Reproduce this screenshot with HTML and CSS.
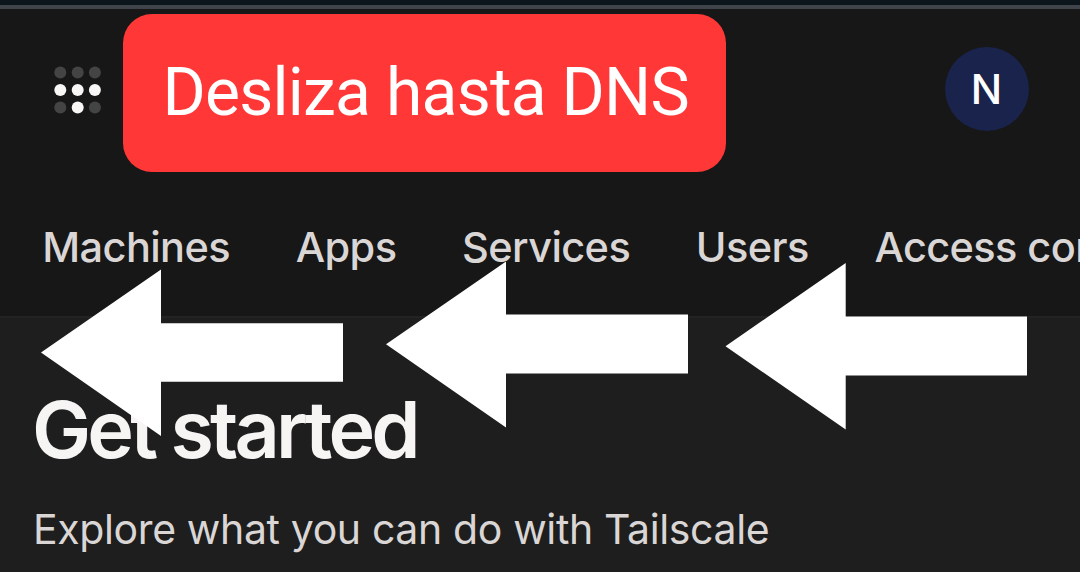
FILE: index.html
```html
<!DOCTYPE html>
<html lang="en">
<head>
<meta charset="utf-8">
<title>Get started</title>
<link rel="stylesheet" href="styles.css">
</head>
<body>
<div class="page">
  <header class="header">
    <div class="topbar">
      <svg class="logo" viewBox="0 0 48 48" width="48" height="48">
        <g fill="#444"><circle cx="6.3" cy="6.5" r="6"/><circle cx="23.7" cy="6.5" r="6"/><circle cx="40.900" cy="6.5" r="6"/><circle cx="6.3" cy="41.500" r="6"/><circle cx="40.900" cy="41.500" r="6"/></g>
        <g fill="#f9f7f6"><circle cx="6.3" cy="24" r="6"/><circle cx="23.7" cy="24" r="6"/><circle cx="40.900" cy="24" r="6"/><circle cx="23.7" cy="41.500" r="6"/></g>
      </svg>
      <div class="banner"><span class="banner-text">Desliza hasta DNS</span></div>
      <div class="avatar"><span>N</span></div>
    </div>
    <nav class="tabs">
      <a>Machines</a><a>Apps</a><a>Services</a><a>Users</a><a>Access controls</a>
    </nav>
  </header>
  <main class="content">
    <h1>Get started</h1>
    <p>Explore what you can do with Tailscale</p>
  </main>
  <svg class="arrows" viewBox="0 0 1080 572" width="1080" height="572" fill="#fff">
    <path d="M41 352.500 161 269.500V323.200H343V381.700H161V436Z"/>
    <path d="M386 344.300 506 261.500V314.500H688V373.500H506V427.500Z"/>
    <path d="M725.500 346.300 845.700 263V316.500H1027V375.500H845.700V429.500Z"/>
  </svg>
</div>
</body>
</html>
```
FILE: styles.css
```css
body { margin: 0; }
.page {
  position: relative;
  width: 1080px;
  height: 572px;
  overflow: hidden;
  background: #1e1e1e;
  font-family: Inter, sans-serif;
}
.header {
  box-sizing: border-box;
  height: 318px;
  border-top: 5px solid #0c141c;
  border-bottom: 2px solid #232323;
  background: #171717;
}
.topbar {
  box-sizing: border-box;
  display: flex;
  height: 180px;
  padding: 7px 51px 0 54px;
  border-top: 4px solid #3e444a;
}
.logo { margin-top: 50px; flex: none; }
.banner {
  display: flex;
  box-sizing: border-box;
  width: 603px;
  height: 158px;
  margin: -2.5px 0 0 21.4px;
  padding: 40.5px 0 0 39px;
  border-radius: 29px;
  background: #ff3837;
}
.banner-text {
  font: 66px/78px Roboto, sans-serif;
  letter-spacing: -0.75px;
  color: #fff;
  white-space: nowrap;
}
.avatar {
  display: flex;
  align-items: center;
  justify-content: center;
  width: 84px;
  height: 84px;
  margin: 31px 0 0 auto;
  border-radius: 50%;
  background: #1a234b;
  color: #fff;
  font-size: 41.5px;
  font-weight: 500;
}
.avatar span { margin: -1px 1px 0 0; }
.tabs {
  display: flex;
  gap: 65.7px;
  padding: 35.5px 0 0 42.3px;
  color: #dad6d5;
  font-size: 41.5px;
  line-height: 52px;
  font-weight: 480;
  letter-spacing: -0.6px;
  white-space: nowrap;
}
.content { padding: 71px 34px 0; }
h1 {
  margin: 0 0 0 -2px;
  color: #f7f5f4;
  font-size: 79px;
  line-height: 80px;
  font-weight: 600;
  letter-spacing: -3.8px;
}
p {
  margin: 35px 0 0 -1px;
  color: #dad6d5;
  font-size: 41px;
  line-height: 50px;
  letter-spacing: -0.37px;
}
.arrows { position: absolute; inset: 0; }
```
